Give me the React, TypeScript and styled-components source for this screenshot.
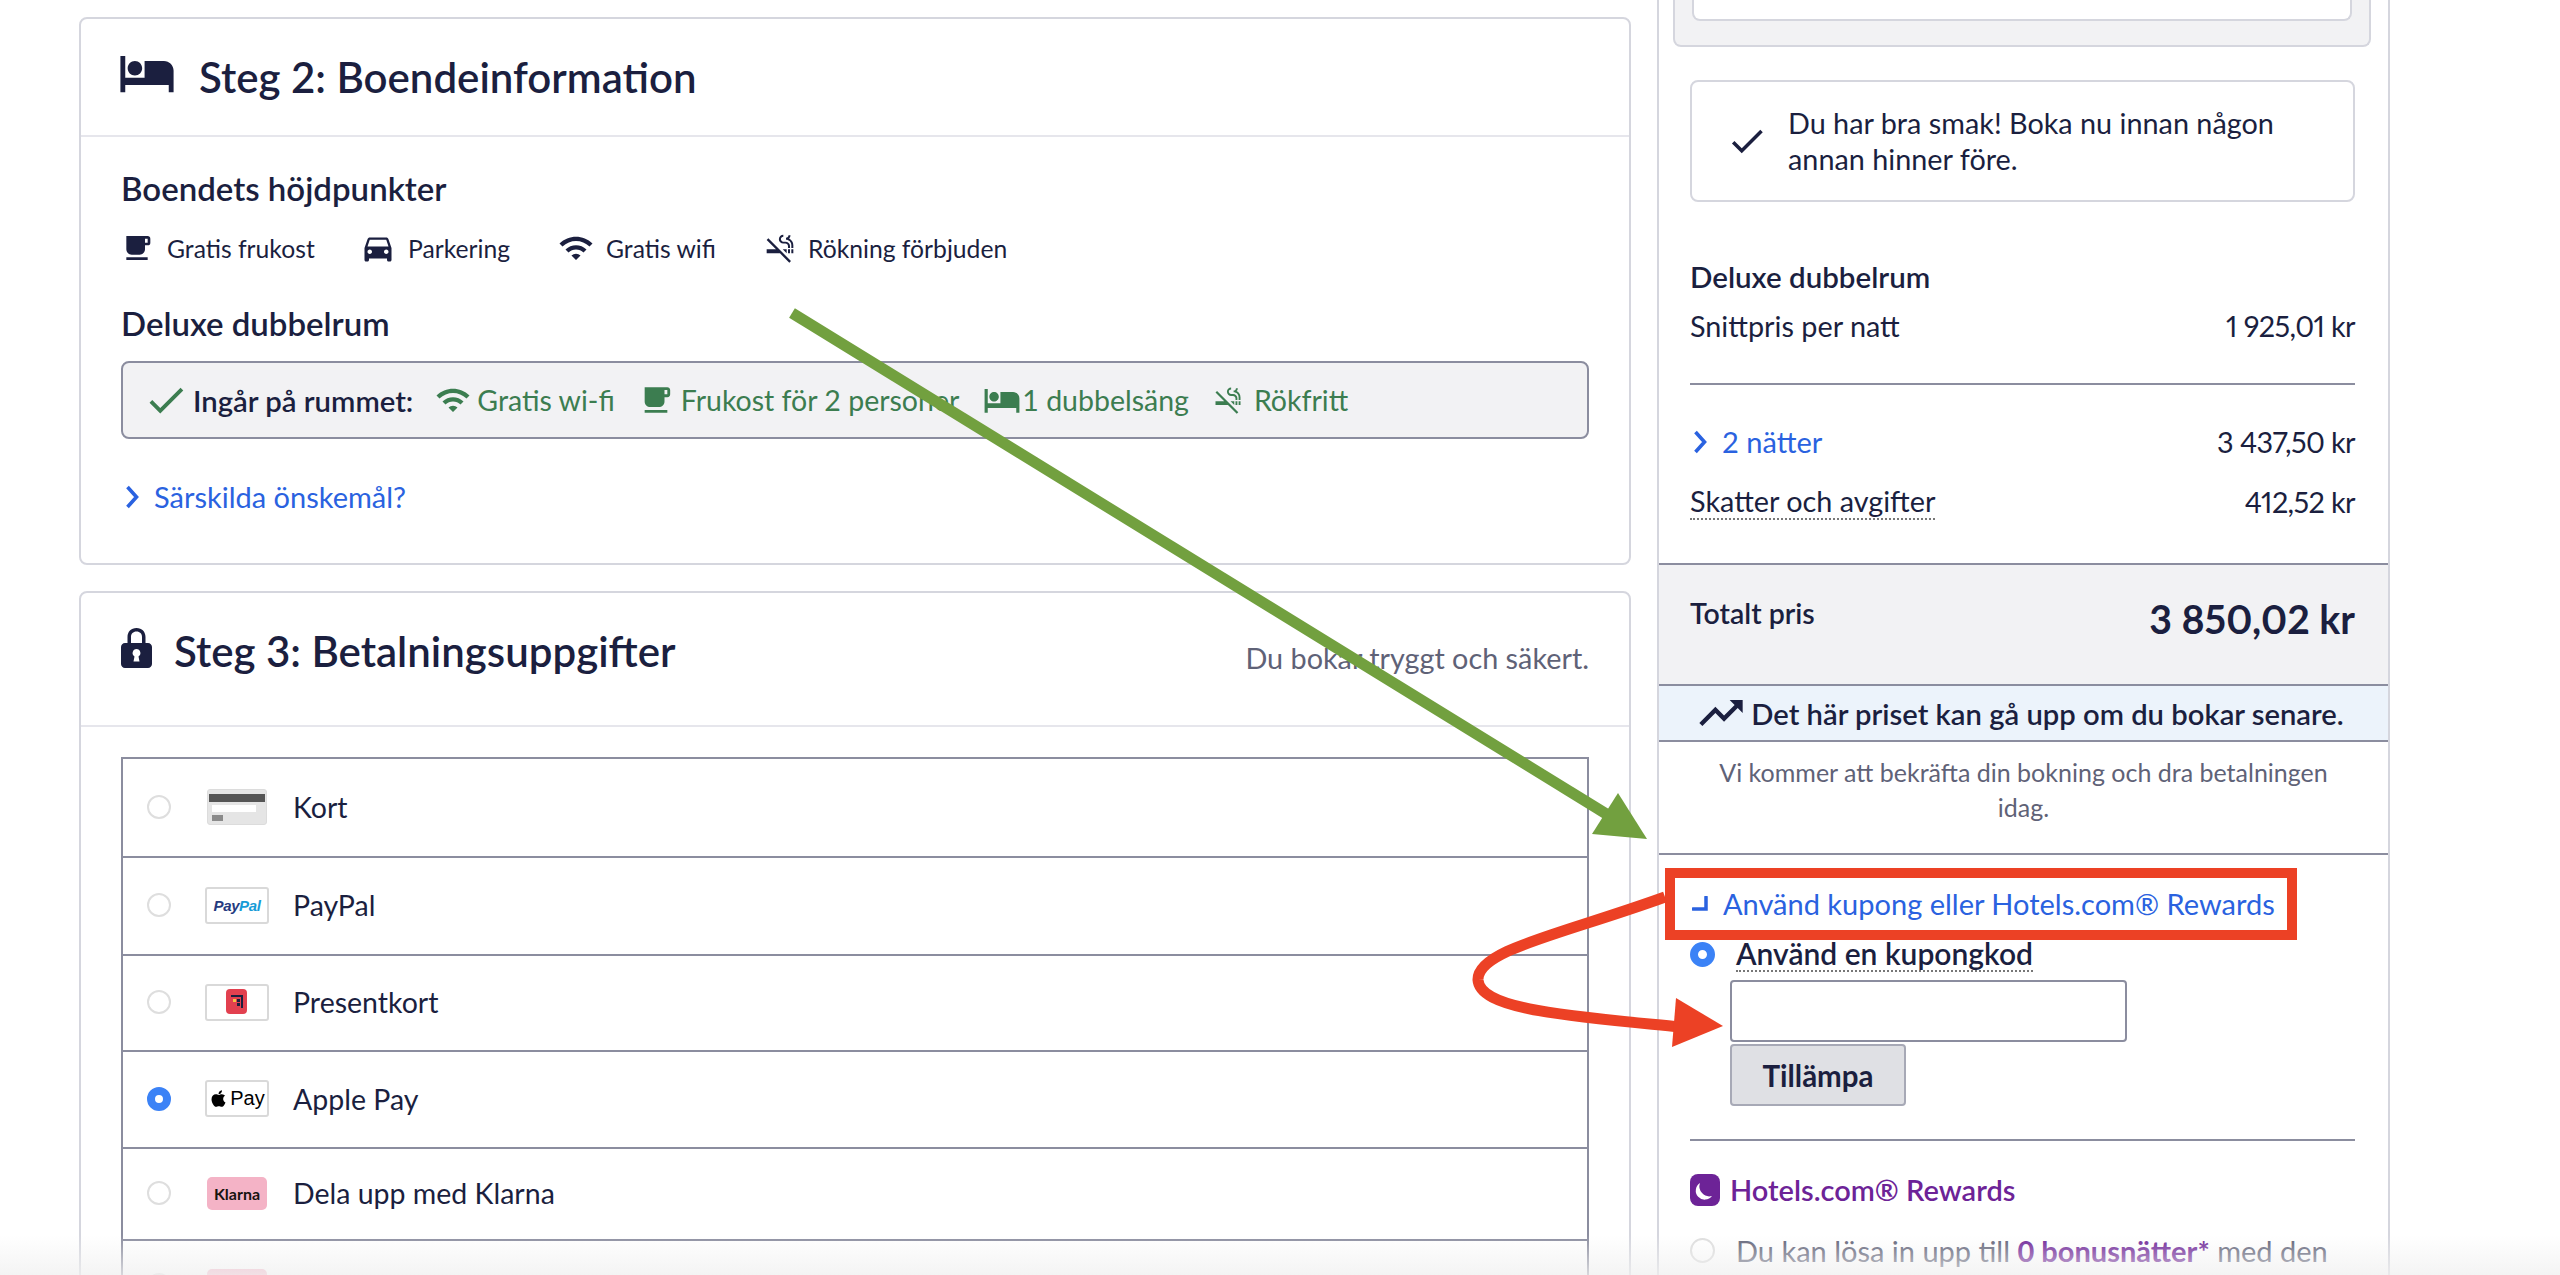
import { createGlobalStyle, styled } from "styled-components";
import {
  MdCheck,
  MdDirectionsCar,
  MdFreeBreakfast,
  MdHotel,
  MdSmokeFree,
  MdTrendingUp,
  MdWifi,
} from "react-icons/md";
import { FaApple } from "react-icons/fa";

const INK = "#1b1f3f";
const GREEN = "#3c7d50";
const BLUE = "#2a62e0";
const PURPLE = "#6d2397";
const LINE = "#8b8d9f";
const SOFT = "#d5d6de";

const GlobalStyle = createGlobalStyle`
  html, body { margin: 0; padding: 0; background: #fff; }
  body { font-family: "Lato", "Liberation Sans", sans-serif; color: ${INK}; }
  * { box-sizing: border-box; }
`;

const Page = styled.div`
  position: relative;
  width: 2560px;
  height: 1275px;
  overflow: hidden;
  display: flex;
  align-items: flex-start;
  gap: 26px;
  padding-left: 79px;
`;

const MainColumn = styled.main`
  width: 1552px;
  padding-top: 17px;
  display: flex;
  flex-direction: column;
  gap: 26px;
`;

const Card = styled.section`
  border: 2px solid ${SOFT};
  border-radius: 8px;
`;

const CardHeader = styled.header<{ $height: number; $lift?: number }>`
  height: ${(p) => p.$height}px;
  padding: 0 40px ${(p) => p.$lift ?? 0}px;
  display: flex;
  align-items: center;
  border-bottom: 2px solid #e6e6ec;
`;

const CardTitle = styled.h2<{ $gap: number }>`
  margin: 0 0 0 ${(p) => p.$gap}px;
  font-size: 42px;
  font-weight: 600;
  line-height: 48px;
  flex: 1;
`;

const HeaderNote = styled.span`
  font-size: 28.8px;
  color: #5f6277;
  margin-top: 14px;
`;

const CardBody = styled.div<{ $top?: number }>`
  padding: ${(p) => p.$top ?? 33}px 40px 0;
`;

const SectionName = styled.h3<{ $top?: number }>`
  margin: ${(p) => p.$top ?? 0}px 0 0;
  font-size: 33px;
  line-height: 36px;
  font-weight: 600;
`;

const Amenities = styled.div`
  display: flex;
  align-items: center;
  margin-top: 24px;
  height: 36px;
`;

const Amenity = styled.span<{ $width: number; $gap?: number }>`
  width: ${(p) => p.$width}px;
  display: flex;
  align-items: center;
  gap: ${(p) => p.$gap ?? 12}px;
  font-size: 24.7px;
  svg { flex: none; }
`;

const IncludedBox = styled.div`
  margin: 20px 0 0;
  height: 78px;
  width: 1468px;
  background: #f2f2f4;
  border: 2px solid ${LINE};
  border-radius: 8px;
  padding-left: 20px;
  display: flex;
  align-items: center;
  font-size: 28.5px;
`;

const IncludedLabel = styled.strong`
  font-size: 29.3px;
  font-weight: 600;
  margin: 0 22px 0 4px;
`;

const IncludedItem = styled.span<{ $gap?: number }>`
  display: flex;
  align-items: center;
  gap: ${(p) => p.$gap ?? 10}px;
  color: ${GREEN};
  margin-right: 24px;
`;

const TextLink = styled.a<{ $size?: number }>`
  display: flex;
  align-items: center;
  color: ${BLUE};
  font-size: ${(p) => p.$size ?? 29}px;
  line-height: 36px;
`;

const SpecialRequests = styled(TextLink)`
  margin-top: 40px;
  padding: 0 0 48px 4px;
  gap: 15px;
`;

const PaymentList = styled.div`
  margin-top: -2px;
  width: 1468px;
  border: 2px solid ${LINE};
  border-bottom: none;
`;

const PaymentRow = styled.div<{ $height: number }>`
  height: ${(p) => p.$height}px;
  padding: 0 0 2px 24px;
  display: flex;
  align-items: center;
  border-bottom: 2px solid ${LINE};
  font-size: 28.5px;
`;

const Radio = styled.span<{ $checked?: boolean; $size?: number }>`
  flex: none;
  display: block;
  width: ${(p) => p.$size ?? 24}px;
  height: ${(p) => p.$size ?? 24}px;
  border-radius: 50%;
  background: #fff;
  border: ${(p) => (p.$checked ? "8px solid #3b82f6" : "2px solid #dedede")};
`;

const LogoSlot = styled.span`
  flex: none;
  width: 64px;
  height: 37px;
  margin: 0 24px 0 34px;
  display: flex;
  align-items: center;
  justify-content: center;
`;

const LogoFrame = styled.span`
  width: 100%;
  height: 100%;
  background: #fff;
  border: 2px solid #d9d9d9;
  border-radius: 3px;
  display: flex;
  align-items: center;
  justify-content: center;
`;

const CardLogo = styled.span`
  width: 60px;
  height: 36px;
  padding: 4px 1px 0;
  background: #e5e5e5;
  border: 1px solid #dcdcdc;
  border-radius: 3px;
  display: flex;
  flex-direction: column;
`;

const MagStripe = styled.i`
  height: 8px;
  background: #555;
`;

const SignatureStrip = styled.i`
  height: 7px;
  width: 44px;
  margin: 3px 0 0 3px;
  background: #fff;
`;

const CvcMark = styled.i`
  height: 6px;
  width: 11px;
  margin: 3px 0 0 3px;
  background: #8b8b8b;
`;

const PayPalWord = styled.span`
  font-family: "Liberation Sans", sans-serif;
  font-size: 15px;
  font-weight: 700;
  font-style: italic;
  letter-spacing: -0.4px;
  color: #253b80;
  em { color: #179bd7; }
`;

const ApplePayWord = styled.span`
  font-family: "Liberation Sans", sans-serif;
  font-size: 20px;
  color: #000;
  display: flex;
  align-items: center;
  gap: 2px;
`;

const KlarnaBadge = styled.span`
  width: 60px;
  height: 33px;
  background: #f4b3c6;
  border-radius: 5px;
  display: flex;
  align-items: center;
  justify-content: center;
  font-size: 16px;
  font-weight: 700;
  color: #17120f;
`;

const SidePanel = styled.aside`
  width: 733px;
  height: 1275px;
  border-left: 2px solid ${SOFT};
  border-right: 2px solid ${SOFT};
`;

const PanelTop = styled.div`
  margin: 0 17px 0 14px;
  height: 47px;
  padding: 0 17px;
  background: #f2f2f4;
  border: 2px solid ${SOFT};
  border-top: none;
  border-radius: 0 0 8px 8px;
`;

const PanelTopInner = styled.div`
  height: 21px;
  background: #fff;
  border: 2px solid ${SOFT};
  border-top: none;
  border-radius: 0 0 8px 8px;
`;

const PanelSection = styled.div`
  padding: 0 33px 0 31px;
`;

const TasteBox = styled.div`
  margin-top: 33px;
  height: 122px;
  border: 2px solid ${SOFT};
  border-radius: 8px;
  padding-left: 34px;
  display: flex;
  align-items: center;
  gap: 20px;
  font-size: 28.8px;
  line-height: 36px;
`;

const PriceName = styled(SectionName)`
  margin-top: 57px;
  font-size: 29.5px;
`;

const PriceRow = styled.div<{ $top: number }>`
  margin-top: ${(p) => p.$top}px;
  display: flex;
  justify-content: space-between;
  align-items: center;
  font-size: 28.8px;
  line-height: 36px;
`;

const PriceValue = styled.span`
  font-variant-numeric: proportional-nums;
  letter-spacing: -0.6px;
`;

const Divider = styled.hr<{ $top: number }>`
  margin: ${(p) => p.$top}px 0 0;
  border: none;
  border-top: 2px solid ${LINE};
`;

const NightsLink = styled(TextLink)`
  padding-left: 3px;
  gap: 15px;
`;

const Dotted = styled.span`
  border-bottom: 2px dotted #777;
  line-height: 34px;
`;

const TotalBand = styled.div`
  margin-top: 43px;
  height: 123px;
  padding: 30px 33px 0 31px;
  display: flex;
  justify-content: space-between;
  background: #f2f2f4;
  border-top: 2px solid ${LINE};
  border-bottom: 2px solid ${LINE};
`;

const TotalLabel = styled.span`
  font-size: 28.5px;
  line-height: 36px;
  font-weight: 600;
`;

const TotalPrice = styled.span`
  font-size: 39.3px;
  line-height: 48px;
  font-weight: 700;
  font-variant-numeric: proportional-nums;
`;

const RiseBand = styled.div`
  height: 56px;
  padding-right: 8px;
  display: flex;
  align-items: center;
  justify-content: center;
  gap: 4px;
  background: #ecf3fb;
  border-bottom: 2px solid ${LINE};
  font-size: 29.2px;
  font-weight: 600;
`;

const ConfirmNote = styled.p`
  margin: 0;
  height: 113px;
  padding: 13px 50px 0;
  font-size: 25px;
  line-height: 35px;
  text-align: center;
  color: #5f6277;
  border-bottom: 2px solid ${LINE};
`;

const CouponToggle = styled(TextLink)`
  margin-top: 31px;
  padding-left: 2px;
  gap: 15px;
`;

const CouponRow = styled.div`
  margin-top: 14px;
  display: flex;
  align-items: center;
  gap: 21px;
  font-size: 30px;
  font-weight: 600;
`;

const CouponInput = styled.div`
  margin: 8px 0 0 40px;
  width: 397px;
  height: 62px;
  background: #fff;
  border: 2px solid ${LINE};
  border-radius: 4px;
`;

const ApplyButton = styled.button`
  display: block;
  margin: 2px 0 0 40px;
  width: 176px;
  height: 62px;
  padding: 0;
  background: #dfe0e4;
  border: 2px solid #a7a9b6;
  border-radius: 4px;
  font: 700 29.5px "Lato", sans-serif;
  color: ${INK};
`;

const RewardsTitle = styled.div`
  margin-top: 31px;
  display: flex;
  align-items: center;
  gap: 10px;
  font-size: 29px;
  font-weight: 600;
  color: ${PURPLE};
`;

const RewardsRow = styled.div`
  margin-top: 26px;
  display: flex;
  align-items: center;
  gap: 21px;
  font-size: 29px;
  white-space: nowrap;
  color: #5f6277;
  strong { color: ${PURPLE}; font-weight: 700; }
`;

const Annotations = styled.svg`
  position: absolute;
  inset: 0;
  pointer-events: none;
`;

const BottomFade = styled.div`
  position: absolute;
  left: 0;
  right: 0;
  bottom: 0;
  height: 40px;
  pointer-events: none;
  background: linear-gradient(rgba(240, 240, 240, 0), rgba(240, 240, 240, 0.75));
`;

function Chevron() {
  return (
    <svg width="14" height="24" viewBox="0 0 14 24" style={{ flex: "none" }}>
      <path d="M2.5 2l9 10-9 10" fill="none" stroke={BLUE} strokeWidth="3.6" />
    </svg>
  );
}

function LockIcon() {
  return (
    <svg width="31" height="40" viewBox="0 0 31 40" style={{ marginTop: -6 }}>
      <path
        fillRule="evenodd"
        fill={INK}
        d="M15.5 0C10 0 6.5 3.8 6.5 9v6H4c-2.2 0-4 1.8-4 4v17c0 2.2 1.8 4 4 4h23c2.2 0 4-1.8 4-4V19c0-2.2-1.8-4-4-4h-2.5V9c0-5.2-3.5-9-9-9zm0 3.5c3.4 0 5.5 2.3 5.5 5.5v6H10V9c0-3.2 2.1-5.5 5.5-5.5zM15.5 21a4 4 0 0 1 2 7.4l1 5.1h-6l1-5.1a4 4 0 0 1 2-7.4z"
      />
    </svg>
  );
}

function GiftLogo() {
  return (
    <svg width="22" height="26" viewBox="0 0 22 26">
      <rect width="21" height="25" rx="4" fill="#e2404f" />
      <path d="M5 7h11v12" fill="none" stroke="#1b1f3f" strokeWidth="2" />
      <rect x="7" y="10" width="3" height="3" fill="#f5c242" />
      <rect x="11" y="10" width="3" height="3" fill="#1b1f3f" />
      <rect x="11" y="14" width="3" height="3" fill="#1b1f3f" />
    </svg>
  );
}

function MoonBadge() {
  return (
    <svg width="30" height="32" viewBox="0 0 30 32">
      <rect width="30" height="32" rx="8" fill={PURPLE} />
      <path d="M10 9a9 9 0 1 0 12 13 10 10 0 0 1-12-13z" fill="#fff" />
    </svg>
  );
}

function CollapseMark() {
  return (
    <svg width="16" height="16" viewBox="0 0 16 16">
      <path d="M14 1v12H1" fill="none" stroke={BLUE} strokeWidth="3.5" strokeLinecap="round" />
    </svg>
  );
}

export default function App() {
  return (
    <>
      <GlobalStyle />
      <Page>
        <MainColumn>
          <Card>
            <CardHeader $height={118}>
              <MdHotel size={58} color={INK} style={{ margin: "-8px -3px 0 -3px" }} />
              <CardTitle $gap={26}>Steg 2: Boendeinformation</CardTitle>
            </CardHeader>
            <CardBody>
              <SectionName>Boendets höjdpunkter</SectionName>
              <Amenities>
                <Amenity $width={239} $gap={14}>
                  <MdFreeBreakfast size={32} />
                  Gratis frukost
                </Amenity>
                <Amenity $width={198}>
                  <MdDirectionsCar size={36} />
                  Parkering
                </Amenity>
                <Amenity $width={206}>
                  <MdWifi size={36} />
                  Gratis wifi
                </Amenity>
                <Amenity $width={300}>
                  <MdSmokeFree size={32} />
                  Rökning förbjuden
                </Amenity>
              </Amenities>
              <SectionName $top={39}>Deluxe dubbelrum</SectionName>
              <IncludedBox>
                <MdCheck size={46} color={GREEN} />
                <IncludedLabel>Ingår på rummet:</IncludedLabel>
                <IncludedItem $gap={6}>
                  <MdWifi size={36} />
                  Gratis wi-fi
                </IncludedItem>
                <IncludedItem $gap={8}>
                  <MdFreeBreakfast size={34} />
                  Frukost för 2 personer
                </IncludedItem>
                <IncludedItem $gap={1}>
                  <MdHotel size={38} />
                  1 dubbelsäng
                </IncludedItem>
                <IncludedItem $gap={11}>
                  <MdSmokeFree size={30} />
                  Rökfritt
                </IncludedItem>
              </IncludedBox>
              <SpecialRequests>
                <Chevron />
                Särskilda önskemål?
              </SpecialRequests>
            </CardBody>
          </Card>
          <Card>
            <CardHeader $height={134} $lift={16}>
              <LockIcon />
              <CardTitle $gap={22}>Steg 3: Betalningsuppgifter</CardTitle>
              <HeaderNote>Du bokar tryggt och säkert.</HeaderNote>
            </CardHeader>
            <CardBody $top={32}>
              <PaymentList>
                <PaymentRow $height={99}>
                  <Radio />
                  <LogoSlot>
                    <CardLogo>
                      <MagStripe />
                      <SignatureStrip />
                      <CvcMark />
                    </CardLogo>
                  </LogoSlot>
                  Kort
                </PaymentRow>
                <PaymentRow $height={98}>
                  <Radio />
                  <LogoSlot>
                    <LogoFrame>
                      <PayPalWord>
                        Pay<em>Pal</em>
                      </PayPalWord>
                    </LogoFrame>
                  </LogoSlot>
                  PayPal
                </PaymentRow>
                <PaymentRow $height={96}>
                  <Radio />
                  <LogoSlot>
                    <LogoFrame>
                      <GiftLogo />
                    </LogoFrame>
                  </LogoSlot>
                  Presentkort
                </PaymentRow>
                <PaymentRow $height={97}>
                  <Radio $checked />
                  <LogoSlot>
                    <LogoFrame>
                      <ApplePayWord>
                        <FaApple size={19} />
                        Pay
                      </ApplePayWord>
                    </LogoFrame>
                  </LogoSlot>
                  Apple Pay
                </PaymentRow>
                <PaymentRow $height={92}>
                  <Radio />
                  <LogoSlot>
                    <KlarnaBadge>Klarna</KlarnaBadge>
                  </LogoSlot>
                  Dela upp med Klarna
                </PaymentRow>
                <PaymentRow $height={92}>
                  <Radio />
                  <LogoSlot>
                    <KlarnaBadge />
                  </LogoSlot>
                </PaymentRow>
              </PaymentList>
            </CardBody>
          </Card>
        </MainColumn>

        <SidePanel>
          <PanelTop>
            <PanelTopInner />
          </PanelTop>
          <PanelSection>
            <TasteBox>
              <MdCheck size={42} />
              <span>
                Du har bra smak! Boka nu innan någon
                <br />
                annan hinner före.
              </span>
            </TasteBox>
            <PriceName>Deluxe dubbelrum</PriceName>
            <PriceRow $top={13}>
              <span>Snittpris per natt</span>
              <PriceValue>1 925,01 kr</PriceValue>
            </PriceRow>
            <Divider $top={39} />
            <PriceRow $top={39}>
              <NightsLink>
                <Chevron />2 nätter
              </NightsLink>
              <PriceValue>3 437,50 kr</PriceValue>
            </PriceRow>
            <PriceRow $top={24}>
              <Dotted>Skatter och avgifter</Dotted>
              <PriceValue>412,52 kr</PriceValue>
            </PriceRow>
          </PanelSection>
          <TotalBand>
            <TotalLabel>Totalt pris</TotalLabel>
            <TotalPrice>3 850,02 kr</TotalPrice>
          </TotalBand>
          <RiseBand>
            <MdTrendingUp size={52} />
            Det här priset kan gå upp om du bokar senare.
          </RiseBand>
          <ConfirmNote>Vi kommer att bekräfta din bokning och dra betalningen idag.</ConfirmNote>
          <PanelSection>
            <CouponToggle>
              <CollapseMark />
              Använd kupong eller Hotels.com® Rewards
            </CouponToggle>
            <CouponRow>
              <Radio $checked $size={25} />
              <Dotted>Använd en kupongkod</Dotted>
            </CouponRow>
            <CouponInput />
            <ApplyButton>Tillämpa</ApplyButton>
            <Divider $top={33} />
            <RewardsTitle>
              <MoonBadge />
              Hotels.com® Rewards
            </RewardsTitle>
            <RewardsRow>
              <Radio $size={25} />
              <span>
                Du kan lösa in upp till <strong>0 bonusnätter*</strong> med den
              </span>
            </RewardsRow>
          </PanelSection>
        </SidePanel>

        <Annotations width="2560" height="1275" viewBox="0 0 2560 1275">
          <path d="M792 313L1608 815" stroke="#72a03f" strokeWidth="11" fill="none" />
          <path d="M1647 839L1592 834L1618 793z" fill="#72a03f" />
          <rect x="1670" y="873" width="622" height="62" fill="none" stroke="#ec4125" strokeWidth="10" />
          <path
            d="M1665 897C1560 935 1477 950 1478 980C1480 1010 1570 1016 1680 1027"
            stroke="#ec4125"
            strokeWidth="11"
            fill="none"
          />
          <path d="M1676 998L1723 1026L1672 1047z" fill="#ec4125" />
        </Annotations>
        <BottomFade />
      </Page>
    </>
  );
}
